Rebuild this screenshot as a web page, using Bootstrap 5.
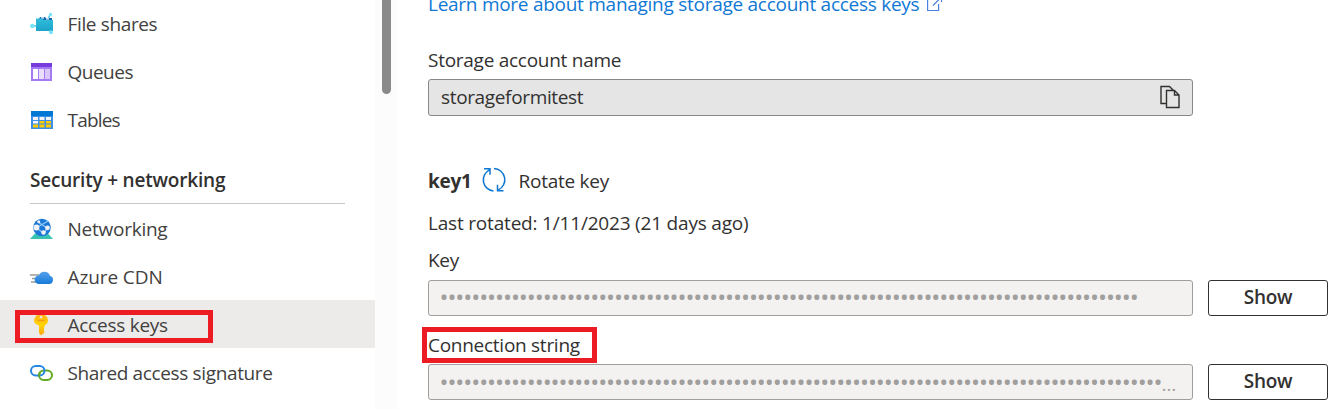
<!DOCTYPE html>
<html lang="en">
<head>
<meta charset="utf-8">
<title>Access keys</title>
<meta name="viewport" content="width=device-width, initial-scale=1">
<link href="https://cdn.jsdelivr.net/npm/bootstrap@5.3.0/dist/css/bootstrap.min.css" rel="stylesheet">
<style>
html,body{height:100%;overflow:hidden}
body{font-family:"Open Sans","Noto Sans",sans-serif;font-size:19px;line-height:28px;letter-spacing:-.27px;color:#323130;background:#fff}
.t{white-space:nowrap}
.side{width:375px;margin-top:-1px;letter-spacing:-.36px}
.side .item{height:48px;padding:2px 0 0 30px;color:#424140}
.side .item svg{width:24px;height:24px;margin-right:13.5px}
.side .active-item{background:#edebe9}
.side .heading{height:61px;margin:0 30px;border-bottom:1px solid #c8c6c4;padding-top:23px;font-weight:600;letter-spacing:-.2px}
.gutter{width:23px;background:#fcfcfc}
.thumb{width:9px;height:94px;margin-left:7px;background:#8a8a8a;border-radius:0 0 5px 5px}
.main{padding:0 13px 0 30px;margin-top:-10px}
.field{width:765px;height:37px;border:1px solid #8a8886;border-radius:3px;background:#e5e5e5;padding:0 12px 2px 12px;letter-spacing:-.35px}
.account{margin-top:5px}
.account-label{margin-top:28px}
.key-head{margin-top:51px}
.key-head svg{margin:-2px 12px 0 9px}
.rotated{margin-top:14px;letter-spacing:-.19px}
.key-label{margin-top:9px}
.key-row{margin-top:6px}
.conn-label{margin-top:15px}
.conn-row{margin-top:5px}
.secret{height:36px;background:#f3f2f1;border-color:#a19f9d;color:#a19f9d;padding:2px 0 0 10.5px;font-size:24px;letter-spacing:-1.09px}
.conn-row .secret{padding-top:3px}
.ellip{font-size:19px;letter-spacing:0}
.show-btn{width:120px;height:36px;border:1px solid #323130;border-radius:3px;color:#323130;font-weight:600;font-size:19px;line-height:28px;padding:0 0 2px;letter-spacing:-.27px}
.link-blue{color:#0f78d4}
.mark-box{position:absolute;border:5px solid #ed1c24}
.mark-keys{left:15px;top:10px;width:198px;height:33px}
.mark-conn{left:-6px;top:-4px;width:175px;height:36px}
</style>
</head>
<body>
<div class="d-flex h-100">
<nav class="side flex-shrink-0">
  <div class="item d-flex align-items-center"><svg viewBox="0 0 24 24"><defs><linearGradient id="f" x2="0" y2="1"><stop stop-color="#32bedd"/><stop offset="1" stop-color="#1ba3c9"/></linearGradient></defs><path d="M3 14h5M20 3l-2 4M21 21l-2-4" stroke="#50c8e8" stroke-width="1.5"/><path d="M9 7l1-2h5l1 1h6v4H9z" fill="#1267b0"/><path d="M11 5.800h3M16 6.800h3" stroke="#fff" stroke-width="1.200"/><path d="M6 6.500h6l2 1.500h9V19H6z" fill="url(#f)"/><circle cx="2.300" cy="14" r="2.300" fill="#78e5fa"/><circle cx="20.500" cy="2.500" r="1.700" fill="#78e5fa"/><circle cx="21" cy="20.200" r="2" fill="#78e5fa"/></svg><span class="t">File shares</span></div>
  <div class="item d-flex align-items-center"><svg viewBox="0 0 24 24"><path d="M1 3h21v18H1z" fill="#a67af4"/><path d="M1 3h21v4H1z" fill="#773adc"/><path d="M3 9h5v10H3z" fill="#fff"/><path d="M9 9h5v10H9z" fill="#e9dffb"/><path d="M15 9h5v10h-5z" fill="#d9c6fa"/></svg><span class="t" style="letter-spacing:-.5px">Queues</span></div>
  <div class="item d-flex align-items-center"><svg viewBox="0 0 24 24"><path d="M1 3h22v18H1z" fill="#3b8fe6"/><path d="M1 3h22v5H1z" fill="#0078d4"/><path d="M3 9h5v3H3zM9.500 9h5v3h-5zM16 9h5v3h-5zM3 13h5v2.500H3z" fill="#f2f5fa"/><path d="M9.500 13h5v2.500h-5zM16 13h5v2.500h-5zM3 16.500h5v3H3zM9.500 16.500h5v3h-5zM16 16.500h5v3h-5z" fill="#ffca00"/></svg><span class="t" style="letter-spacing:-.8px">Tables</span></div>
  <div class="heading t"><span>Security + networking</span></div>
  <div class="item d-flex align-items-center"><svg viewBox="0 0 24 24"><path d="M0 22l5-5.500h13l5 5.500z" fill="#37c2b1"/><circle cx="12" cy="10.500" r="8.800" fill="#1b78d6"/><path d="M5 10l10 7M6 11l12-7M8 5l9 6M17 11l-3 6" stroke="#8fc9f8" stroke-width="1.300"/><circle cx="6.500" cy="10.500" r="2.900" fill="#f2f2f2"/><circle cx="17.500" cy="10.800" r="2.400" fill="#f2f2f2"/><circle cx="13.500" cy="15.500" r="2.200" fill="#f2f2f2"/><circle cx="8.800" cy="4.800" r="1.500" fill="#f2f2f2"/></svg><span class="t" style="letter-spacing:-.25px">Networking</span></div>
  <div class="item d-flex align-items-center"><svg viewBox="0 0 24 24"><defs><linearGradient id="c" x2="0" y2="1"><stop stop-color="#55a0ee"/><stop offset="1" stop-color="#177bd8"/></linearGradient></defs><path d="M0 10h9M2 13.500h8M1 17h9" stroke="#9b9b9b" stroke-width="1.300"/><path d="M9 19a4.300 4.300 0 0 1-.2-8.600 6 6 0 0 1 11.200.4A4.200 4.200 0 0 1 19.200 19z" fill="url(#c)"/></svg><span class="t" style="letter-spacing:-.1px">Azure CDN</span></div>
  <div class="item active-item d-flex align-items-center position-relative"><svg viewBox="0 0 24 24"><defs><linearGradient id="k" x2="0" y2="1"><stop stop-color="#ffb01a"/><stop offset=".5" stop-color="#ffd400"/><stop offset="1" stop-color="#fba419"/></linearGradient></defs><path fill-rule="evenodd" d="M8 1.500h6Q18 4 18 7.500c0 2.500-1.500 4-3.500 5V14l-.8 1 .8 1-.8 1.200.8 1.200L14 20 11 22.500 9 20v-7.500C6 11.500 4 10 4 7.500S6 2.500 8 1.500zM11 2.800a1.300 1.300 0 1 0 .01 0z" fill="url(#k)"/><path d="M7.500 7.500h7" stroke="#f59b12" stroke-width="1.200"/></svg><span class="t" style="letter-spacing:-.25px">Access keys</span><span class="mark-box mark-keys"></span></div>
  <div class="item d-flex align-items-center"><svg viewBox="0 0 24 24" fill="none" stroke-width="2"><rect x="9" y="9.500" width="13" height="9.500" rx="4.700" stroke="#62aa22"/><rect x="1" y="5" width="13.500" height="9.500" rx="4.700" stroke="#2688e3"/><path d="M10.200 11.500Q8.800 13 9.200 15.500" stroke="#62aa22"/></svg><span class="t">Shared access signature</span></div>
</nav>
<div class="gutter flex-shrink-0"><div class="thumb"></div></div>
<main class="main flex-grow-1">
  <div class="link-blue d-flex align-items-center"><span class="t">Learn more about managing storage account access keys</span><svg class="ms-2" width="16" height="16" viewBox="0 0 16 16" fill="none" stroke="#4a82dd" stroke-width="1.200"><path d="M7 3H.6v11.500h11V8M6 9.500L14.500 1M9.500 1h5v5"/></svg></div>
  <div class="account-label"><span class="t">Storage account name</span></div>
  <div class="field account d-flex align-items-center justify-content-between"><span class="t">storageformitest</span><svg width="20" height="24" viewBox="0 0 20 24" fill="none" stroke="#323130" stroke-width="1.400"><path d="M6 18.500H1V1.500h8.500l4 4M6.500 5.500h8l4.500 4.500V22.500H6.500zM14.500 5.500V10H19"/></svg></div>
  <div class="key-head d-flex align-items-center"><span class="t fw-bold">key1</span><svg width="26" height="26" viewBox="0 0 26 26" fill="none" stroke="#0f78d4" stroke-width="1.500"><path d="M12.500 24A11.200 11.200 0 0 1 8.500 2.800M13 1.500A11.200 11.200 0 0 1 17 23M3 1.800h6v6M22.500 23.800h-6v-6"/></svg><span class="t">Rotate key</span></div>
  <div class="rotated"><span class="t">Last rotated: 1/11/2023 (21 days ago)</span></div>
  <div class="key-label"><span class="t">Key</span></div>
  <div class="key-row d-flex justify-content-between"><div class="field secret t">••••••••••••••••••••••••••••••••••••••••••••••••••••••••••••••••••••••••••••••••••••••••</div><button type="button" class="btn show-btn">Show</button></div>
  <div class="conn-label position-relative"><span class="t">Connection string</span><span class="mark-box mark-conn"></span></div>
  <div class="conn-row d-flex justify-content-between"><div class="field secret t">•••••••••••••••••••••••••••••••••••••••••••••••••••••••••••••••••••••••••••••••••••••••••••<span class="ellip">…</span></div><button type="button" class="btn show-btn">Show</button></div>
</main>
</div>
<script src="https://cdn.jsdelivr.net/npm/bootstrap@5.3.0/dist/js/bootstrap.bundle.min.js"></script>
</body>
</html>
